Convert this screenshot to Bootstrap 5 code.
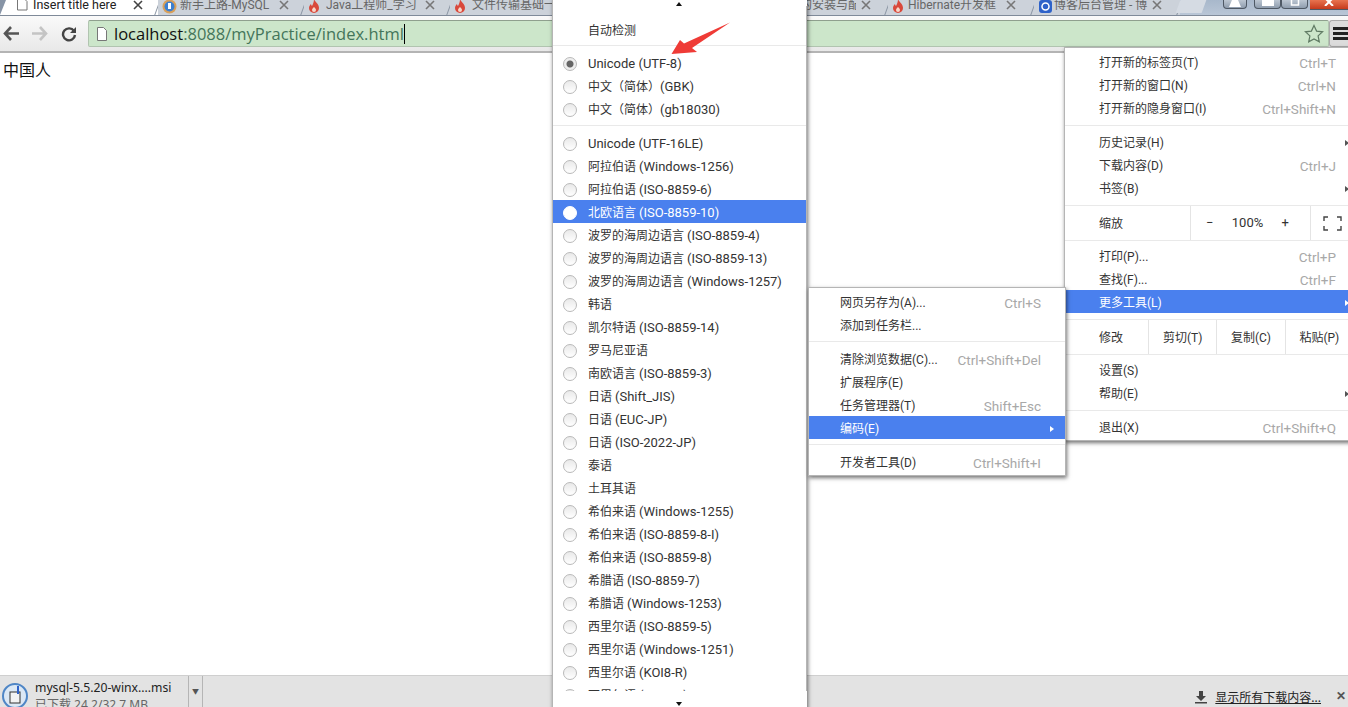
<!DOCTYPE html>
<html lang="zh">
<head>
<meta charset="utf-8">
<title>Insert title here</title>
<link href="https://cdn.jsdelivr.net/npm/bootstrap@5.3.0/dist/css/bootstrap.min.css" rel="stylesheet">
<style>
html,body{height:100%;margin:0}
body{width:1348px;height:707px;overflow:hidden;position:relative;background:#fff;font-family:"Roboto","Noto Sans CJK SC",sans-serif;font-size:12px;color:#333}
.ui-strip{height:16px;background:linear-gradient(#a8b8cb,#b9c6d6);overflow:hidden;border-bottom:1px solid #7f8a99}
.ui-tab{flex:0 0 146px;height:15px;position:relative;background:#ccd2da;color:#666;font-size:12px;line-height:10px;white-space:nowrap}
.ui-tab::after{content:"";position:absolute;right:0;top:-2px;bottom:-2px;border-right:1px solid #8a95a3;transform:skewX(-20deg)}
.ui-tab-active{flex-basis:158px;background:#fff;color:#222;font-size:12.5px}
.ui-tab-active::before{content:"";position:absolute;left:0;top:0;width:0;height:0;border-top:15px solid #8794a6;border-right:6px solid transparent}
.ui-tab-wide{flex-basis:292px}
.ui-tab-label{position:absolute;left:22px;top:0;overflow:hidden;width:94px;height:15px}
.ui-tab-label-near{left:20px}
.ui-tab-label-first{left:33px;width:92px}
.ui-tab-label-end{left:204px;width:56px}
.ui-tab-ico{position:absolute;left:4px;top:-1px}
.ui-tab-ico-page{left:17px}
.ui-tab-x{position:absolute;left:121px;top:0}
.ui-tab-x-first{left:133px}
.ui-tab-x-wide{left:265px}
.ui-tab-x-near{left:118px}
.ui-newtab{width:26px;height:13px;background:#d5dbe3;transform:skewX(-20deg);margin-left:-2px}
.ui-ctrl{height:9px;background:linear-gradient(#bcc6d2,#8f9dae);border:1px solid #4e5864;border-top:0;border-radius:0 0 4px 4px;display:flex;align-items:flex-start;justify-content:center}
.ui-ctrl-close{background:linear-gradient(#e8734f,#c63a1c);border-radius:0;border-width:0 0 1px 0;height:10px}
.ui-bar{height:37px;background:linear-gradient(#fafafa,#e8e8e8);border-bottom:2px solid #b4b4b4;padding:4px 0 0 0}
.ui-nav{width:83px;padding-left:3px;gap:11px;height:27px}
.ui-reload{margin-left:2px}
.ui-omni{flex:1 1 auto;height:27px;margin-left:5px;background:#cce6ca;border:1px solid #b1c4b0;border-top-color:#8fa08e;border-radius:2px;padding-left:7px;font-size:16.5px;line-height:25px;color:#44755a;font-family:"Open Sans","Noto Sans",sans-serif}
.ui-omni b{font-weight:400;color:#111}
.ui-omni-page{margin-right:6px;flex-shrink:0}
.ui-caret{display:inline-block;width:1px;height:20px;background:#000;vertical-align:-4px}
.ui-burger{width:19px;height:27px;background:#dcdcdc;border:1px solid #aaa;border-right:0;border-radius:3px 0 0 3px;padding:6px 0 0 3px}
.ui-burger i{display:block;height:3px;background:#222;margin-bottom:2px}
.ui-page{flex:1 1 auto;padding:4px 3px;font-size:16px;line-height:24px;color:#111;font-family:"Noto Sans CJK SC",sans-serif}
.ui-dl{height:32px;background:#e3e3e3;border-top:1px solid #cfcfcf;font-size:12.2px;overflow:hidden;font-family:"Noto Sans","Noto Sans CJK SC",sans-serif}
.ui-dl-file{width:188px;padding:4px 0 0 35px;line-height:16px;position:relative;color:#222;white-space:nowrap}
.ui-dl-sub{color:#666;font-size:12px;margin-top:1px}
.ui-dl-btn{width:15px;border-left:1px solid #b5b5b5;border-right:1px solid #b5b5b5;text-align:center;color:#555;font-size:7px;padding-top:11px}
.ui-dl-ico{position:absolute;left:2px;top:7px}
.ui-dl-arrow{margin-top:14px}
.ui-dl-all{color:#222;text-decoration:underline;font-size:12px;margin:13px 15px 0 7px}
.ui-dl-x{margin:11px 2px 0 0;font-weight:700;color:#555}
.ui-menu{position:absolute;background:#fff;box-shadow:1px 2px 4px rgba(0,0,0,.55);border:1px solid #b5b5b5;font-size:12px;color:#333;white-space:nowrap}
.ui-menu-enc{left:552px;top:-2px;width:255px;height:712px;padding-top:19px;overflow:hidden}
.ui-menu-main{left:1064px;top:47px;width:290px;padding:2px 0}
.ui-menu-sub{left:808px;top:287px;width:258px;padding:2px 0 2px}
.ui-item{height:23px;line-height:21px;padding:2px 24px 0 35px}
.ui-menu-main .ui-item{padding:3px 17px 0 34px}
.ui-menu-sub .ui-item{padding-left:31px;padding-top:3px}
.ui-menu-enc .ui-item-top{padding-top:3px}
.ui-plain{margin-top:2px}
.ui-la{font-size:13px}
.ui-key{color:#a8a8a8;font-size:13.5px}
.ui-hi{background:#4a80ee;color:#fff}
.ui-sep{height:1px;background:#e9e9e9;margin:5px 0}
.ui-sep-first{margin-top:4px}
.ui-menu-main .ui-sep{margin:6px 0 4px}
.ui-menu-main .ui-sep-tight{margin-bottom:0}
.ui-menu-main .ui-sep-after{margin:0 0 3px}
.ui-radio{width:14px;height:14px;border-radius:50%;border:1px solid #b9b9b9;background:linear-gradient(#e9e9e9,#fff);margin:0 11px 0 -25px;flex:none}
.ui-radio-on{background:radial-gradient(circle,#666 0,#666 3px,#eee 4px)}
.ui-hi .ui-radio{background:#fff;border-color:#fff}
.ui-arrow{width:0;height:0;border-style:solid;border-width:3px 0 3px 4px;border-color:transparent transparent transparent currentColor}
.ui-out{margin-right:-13px;color:#555}
.ui-out-hi{color:#fff}
.ui-sub-out{margin-right:-13px}
.ui-tool{height:34px;padding-left:34px}
.ui-tool-label{line-height:36px;flex-shrink:0}
.ui-tool-cell{border-left:1px solid #e4e4e4;height:34px;line-height:36px;text-align:center}
.ui-zoom{width:120px;padding:0 21px 0 15px;font-size:13px;line-height:34px}
.ui-full{padding-left:12px;line-height:34px}
.ui-scroll{position:absolute;left:553px;width:254px;background:#fff;height:6px}
.ui-scroll-bot{top:691px;height:16px}
.ui-tri{position:absolute;left:123px;width:0;height:0;border-left:3px solid transparent;border-right:3px solid transparent}
.ui-tri-up{top:2px;border-bottom:4px solid #111}
.ui-tri-down{top:11px;border-top:4px solid #111}
.ui-arrow-mark{position:absolute;left:665px;top:18px}
.w-user{width:24px}.w-win{width:27px}.w-close{width:38px}
.ui-gap-7{margin-right:7px}.ui-gap-2{margin-right:2px}
</style>
</head>
<body class="d-flex flex-column">

<div class="ui-strip d-flex flex-shrink-0">
  <div class="ui-tab ui-tab-active">
    <svg class="ui-tab-ico ui-tab-ico-page" width="11" height="12" viewBox="0 0 11 12"><path d="M.5-1h6l3.500 3.500V11H.5z" fill="#fff" stroke="#777"/></svg>
    <span class="ui-tab-label ui-tab-label-first">Insert title here</span>
    <svg class="ui-tab-x ui-tab-x-first" width="10" height="10" viewBox="0 0 10 10"><path d="M1 1l8 8M9 1l-8 8" stroke="#444" stroke-width="1.6"/></svg>
  </div>
  <div class="ui-tab">
    <svg class="ui-tab-ico" width="15" height="15" viewBox="0 0 15 15"><circle cx="7.500" cy="7.500" r="7" fill="#d9a05a"/><circle cx="7.500" cy="7.500" r="5" fill="#3c7fd0"/><rect x="6" y="4" width="3" height="6" fill="#fff"/></svg>
    <span class="ui-tab-label">新手上路-MySQL</span>
    <svg class="ui-tab-x" width="10" height="10" viewBox="0 0 10 10"><path d="M1 1l8 8M9 1l-8 8" stroke="#777" stroke-width="1.600"/></svg>
  </div>
  <div class="ui-tab">
    <svg class="ui-tab-ico" width="13" height="15" viewBox="0 0 13 15"><path d="M6 0c1 3 5 5 5 9a5 5 0 0 1-10 0c0-2 1-3 2-4 0 1 1 2 1 2 1-2 2-4 2-7z" fill="#d9483b"/><path d="M6 8c1 1 2 2 2 3a2 2 0 0 1-4 0c0-1 1-2 2-3z" fill="#f7d6c8"/></svg>
    <span class="ui-tab-label">Java工程师_学习</span>
    <svg class="ui-tab-x" width="10" height="10" viewBox="0 0 10 10"><path d="M1 1l8 8M9 1l-8 8" stroke="#777" stroke-width="1.600"/></svg>
  </div>
  <div class="ui-tab">
    <svg class="ui-tab-ico" width="13" height="15" viewBox="0 0 13 15"><path d="M6 0c1 3 5 5 5 9a5 5 0 0 1-10 0c0-2 1-3 2-4 0 1 1 2 1 2 1-2 2-4 2-7z" fill="#d9483b"/><path d="M6 8c1 1 2 2 2 3a2 2 0 0 1-4 0c0-1 1-2 2-3z" fill="#f7d6c8"/></svg>
    <span class="ui-tab-label">文件传输基础一</span>
  </div>
  <div class="ui-tab ui-tab-wide">
    <span class="ui-tab-label ui-tab-label-end">的安装与配</span>
    <svg class="ui-tab-x ui-tab-x-wide" width="10" height="10" viewBox="0 0 10 10"><path d="M1 1l8 8M9 1l-8 8" stroke="#777" stroke-width="1.600"/></svg>
  </div>
  <div class="ui-tab">
    <svg class="ui-tab-ico" width="13" height="15" viewBox="0 0 13 15"><path d="M6 0c1 3 5 5 5 9a5 5 0 0 1-10 0c0-2 1-3 2-4 0 1 1 2 1 2 1-2 2-4 2-7z" fill="#d9483b"/><path d="M6 8c1 1 2 2 2 3a2 2 0 0 1-4 0c0-1 1-2 2-3z" fill="#f7d6c8"/></svg>
    <span class="ui-tab-label ui-tab-label-near">Hibernate开发框</span>
    <svg class="ui-tab-x ui-tab-x-near" width="10" height="10" viewBox="0 0 10 10"><path d="M1 1l8 8M9 1l-8 8" stroke="#777" stroke-width="1.600"/></svg>
  </div>
  <div class="ui-tab">
    <svg class="ui-tab-ico" width="15" height="15" viewBox="0 0 15 15"><rect x="1" y="1" width="13" height="13" rx="3" fill="#2e62c9"/><circle cx="7.500" cy="7.500" r="3.500" fill="none" stroke="#fff" stroke-width="1.500"/></svg>
    <span class="ui-tab-label ui-tab-label-near">博客后台管理 - 博</span>
    <svg class="ui-tab-x ui-tab-x-near" width="10" height="10" viewBox="0 0 10 10"><path d="M1 1l8 8M9 1l-8 8" stroke="#777" stroke-width="1.600"/></svg>
  </div>
  <div class="ui-newtab flex-shrink-0"></div>
  <div class="ms-auto d-flex">
    <div class="ui-ctrl w-user ui-gap-7"><svg width="12" height="7" viewBox="0 0 12 7"><path d="M3 0h6l3 7H0z" fill="#fff"/></svg></div>
    <div class="ui-ctrl w-win"><svg width="12" height="6" viewBox="0 0 12 6"><rect width="12" height="6" fill="#fff"/></svg></div>
    <div class="ui-ctrl w-win ui-gap-2"><svg width="12" height="6" viewBox="0 0 12 6"><path d="M2.500 0v5h7V0" fill="none" stroke="#fff" stroke-width="1.500"/></svg></div>
    <div class="ui-ctrl ui-ctrl-close w-close"><svg width="12" height="6" viewBox="0 0 12 6"><path d="M2 -2l8 8M10 -2l-8 8" stroke="#fff" stroke-width="2"/></svg></div>
  </div>
</div>

<div class="ui-bar d-flex flex-shrink-0">
  <div class="ui-nav d-flex align-items-center flex-shrink-0">
    <svg width="17" height="15" viewBox="0 0 17 15"><path d="M8 1L2 7.500 8 14M2 7.500h14" fill="none" stroke="#555" stroke-width="2.600"/></svg>
    <svg width="17" height="15" viewBox="0 0 17 15"><path d="M9 1l6 6.500L9 14M15 7.500H1" fill="none" stroke="#c4c4c4" stroke-width="2.600"/></svg>
    <svg class="ui-reload" width="16" height="16" viewBox="0 0 16 16"><path d="M13 5A6 6 0 1 0 14 9" fill="none" stroke="#444" stroke-width="2.400"/><path d="M15 1v6H9z" fill="#444"/></svg>
  </div>
  <div class="ui-omni d-flex align-items-center">
    <svg class="ui-omni-page" width="12" height="14" viewBox="0 0 12 14"><path d="M1.500.5h6l3 3v10h-9z" fill="#fff" stroke="#777"/></svg>
    <span><b>localhost</b>:8088/myPractice/index.html<span class="ui-caret"></span></span>
    <svg class="ms-auto me-1" width="20" height="20" viewBox="0 0 20 20"><path d="M10 1.500l2.600 5.600 6 .7-4.500 4.100 1.200 6L10 15l-5.300 2.900 1.200-6L1.400 7.800l6-.7z" fill="none" stroke="#5f7a63" stroke-width="1.200"/></svg>
  </div>
  <div class="ui-burger flex-shrink-0"><i></i><i></i><i></i></div>
</div>

<main class="ui-page">中国人</main>

<div class="ui-dl d-flex flex-shrink-0">
  <div class="ui-dl-file">
    <svg class="ui-dl-ico" width="26" height="26" viewBox="0 0 26 26"><circle cx="13" cy="13" r="12" fill="#dbe8f5" stroke="#4f86c6" stroke-width="2"/><rect x="8" y="9" width="10" height="11" fill="#f3f3f3" stroke="#333"/><path d="M16 3v8" stroke="#2e62c9" stroke-width="2"/></svg>
    <div>mysql-5.5.20-winx....msi</div>
    <div class="ui-dl-sub">已下载 24.2/32.7 MB</div>
  </div>
  <div class="ui-dl-btn">▼</div>
  <svg class="ms-auto ui-dl-arrow" width="14" height="14" viewBox="0 0 14 14"><path d="M5 1h4v5h3L7 11 2 6h3zM1 12h12v1.500H1z" fill="#444"/></svg>
  <div class="ui-dl-all">显示所有下载内容...</div>
  <div class="ui-dl-x">✕</div>
</div>

<div class="ui-menu ui-menu-enc">
  <div class="ui-item ui-item-top">自动检测</div>
  <div class="ui-sep ui-sep-first"></div>
  <div class="ui-item d-flex align-items-center"><span class="ui-radio ui-radio-on"></span><span class="ui-la">Unicode (UTF-8)</span></div>
  <div class="ui-item d-flex align-items-center"><span class="ui-radio"></span><span>中文（简体）<span class="ui-la">(GBK)</span></span></div>
  <div class="ui-item d-flex align-items-center"><span class="ui-radio"></span><span>中文（简体）<span class="ui-la">(gb18030)</span></span></div>
  <div class="ui-sep"></div>
  <div class="ui-item d-flex align-items-center"><span class="ui-radio"></span><span class="ui-la">Unicode (UTF-16LE)</span></div>
  <div class="ui-item d-flex align-items-center"><span class="ui-radio"></span><span>阿拉伯语 <span class="ui-la">(Windows-1256)</span></span></div>
  <div class="ui-item d-flex align-items-center"><span class="ui-radio"></span><span>阿拉伯语 <span class="ui-la">(ISO-8859-6)</span></span></div>
  <div class="ui-item ui-hi d-flex align-items-center"><span class="ui-radio"></span><span>北欧语言 <span class="ui-la">(ISO-8859-10)</span></span></div>
  <div class="ui-item d-flex align-items-center"><span class="ui-radio"></span><span>波罗的海周边语言 <span class="ui-la">(ISO-8859-4)</span></span></div>
  <div class="ui-item d-flex align-items-center"><span class="ui-radio"></span><span>波罗的海周边语言 <span class="ui-la">(ISO-8859-13)</span></span></div>
  <div class="ui-item d-flex align-items-center"><span class="ui-radio"></span><span>波罗的海周边语言 <span class="ui-la">(Windows-1257)</span></span></div>
  <div class="ui-item d-flex align-items-center"><span class="ui-radio"></span><span class="ui-plain">韩语</span></div>
  <div class="ui-item d-flex align-items-center"><span class="ui-radio"></span><span>凯尔特语 <span class="ui-la">(ISO-8859-14)</span></span></div>
  <div class="ui-item d-flex align-items-center"><span class="ui-radio"></span><span class="ui-plain">罗马尼亚语</span></div>
  <div class="ui-item d-flex align-items-center"><span class="ui-radio"></span><span>南欧语言 <span class="ui-la">(ISO-8859-3)</span></span></div>
  <div class="ui-item d-flex align-items-center"><span class="ui-radio"></span><span>日语 <span class="ui-la">(Shift_JIS)</span></span></div>
  <div class="ui-item d-flex align-items-center"><span class="ui-radio"></span><span>日语 <span class="ui-la">(EUC-JP)</span></span></div>
  <div class="ui-item d-flex align-items-center"><span class="ui-radio"></span><span>日语 <span class="ui-la">(ISO-2022-JP)</span></span></div>
  <div class="ui-item d-flex align-items-center"><span class="ui-radio"></span><span class="ui-plain">泰语</span></div>
  <div class="ui-item d-flex align-items-center"><span class="ui-radio"></span><span class="ui-plain">土耳其语</span></div>
  <div class="ui-item d-flex align-items-center"><span class="ui-radio"></span><span>希伯来语 <span class="ui-la">(Windows-1255)</span></span></div>
  <div class="ui-item d-flex align-items-center"><span class="ui-radio"></span><span>希伯来语 <span class="ui-la">(ISO-8859-8-I)</span></span></div>
  <div class="ui-item d-flex align-items-center"><span class="ui-radio"></span><span>希伯来语 <span class="ui-la">(ISO-8859-8)</span></span></div>
  <div class="ui-item d-flex align-items-center"><span class="ui-radio"></span><span>希腊语 <span class="ui-la">(ISO-8859-7)</span></span></div>
  <div class="ui-item d-flex align-items-center"><span class="ui-radio"></span><span>希腊语 <span class="ui-la">(Windows-1253)</span></span></div>
  <div class="ui-item d-flex align-items-center"><span class="ui-radio"></span><span>西里尔语 <span class="ui-la">(ISO-8859-5)</span></span></div>
  <div class="ui-item d-flex align-items-center"><span class="ui-radio"></span><span>西里尔语 <span class="ui-la">(Windows-1251)</span></span></div>
  <div class="ui-item d-flex align-items-center"><span class="ui-radio"></span><span>西里尔语 <span class="ui-la">(KOI8-R)</span></span></div>
  <div class="ui-item d-flex align-items-center"><span class="ui-radio"></span><span>西里尔语 <span class="ui-la">(KOI8-U)</span></span></div>
</div>
<div class="ui-scroll top-0"><span class="ui-tri ui-tri-up"></span></div>
<div class="ui-scroll ui-scroll-bot"><span class="ui-tri ui-tri-down"></span></div>

<div class="ui-menu ui-menu-main">
  <div class="ui-item d-flex justify-content-between"><span>打开新的标签页(T)</span><span class="ui-key">Ctrl+T</span></div>
  <div class="ui-item d-flex justify-content-between"><span>打开新的窗口(N)</span><span class="ui-key">Ctrl+N</span></div>
  <div class="ui-item d-flex justify-content-between"><span>打开新的隐身窗口(I)</span><span class="ui-key">Ctrl+Shift+N</span></div>
  <div class="ui-sep"></div>
  <div class="ui-item d-flex justify-content-between align-items-center"><span>历史记录(H)</span><span class="ui-arrow ui-out"></span></div>
  <div class="ui-item d-flex justify-content-between"><span>下载内容(D)</span><span class="ui-key">Ctrl+J</span></div>
  <div class="ui-item d-flex justify-content-between align-items-center"><span>书签(B)</span><span class="ui-arrow ui-out"></span></div>
  <div class="ui-sep ui-sep-tight"></div>
  <div class="ui-tool d-flex">
    <div class="ui-tool-label" style="width:91px">缩放</div>
    <div class="ui-tool-cell ui-zoom d-flex justify-content-between"><span>−</span><span>100%</span><span>+</span></div>
    <div class="ui-tool-cell ui-full flex-grow-1 text-start"><svg width="19" height="15" viewBox="0 0 19 15"><path d="M1 5V1h4M14 1h4v4M18 10v4h-4M5 14H1v-4" fill="none" stroke="#444" stroke-width="1.400"/></svg></div>
  </div>
  <div class="ui-sep ui-sep-after"></div>
  <div class="ui-item d-flex justify-content-between"><span>打印(P)...</span><span class="ui-key">Ctrl+P</span></div>
  <div class="ui-item d-flex justify-content-between"><span>查找(F)...</span><span class="ui-key">Ctrl+F</span></div>
  <div class="ui-item ui-hi d-flex justify-content-between align-items-center"><span>更多工具(L)</span><span class="ui-arrow ui-out ui-out-hi"></span></div>
  <div class="ui-sep ui-sep-tight"></div>
  <div class="ui-tool d-flex">
    <div class="ui-tool-label" style="width:49px">修改</div>
    <div class="ui-tool-cell" style="width:71px">剪切(T)</div>
    <div class="ui-tool-cell" style="width:71px">复制(C)</div>
    <div class="ui-tool-cell" style="width:71px">粘贴(P)</div>
  </div>
  <div class="ui-sep ui-sep-after"></div>
  <div class="ui-item">设置(S)</div>
  <div class="ui-item d-flex justify-content-between align-items-center"><span>帮助(E)</span><span class="ui-arrow ui-out"></span></div>
  <div class="ui-sep"></div>
  <div class="ui-item d-flex justify-content-between"><span>退出(X)</span><span class="ui-key">Ctrl+Shift+Q</span></div>
</div>

<div class="ui-menu ui-menu-sub">
  <div class="ui-item d-flex justify-content-between"><span>网页另存为(A)...</span><span class="ui-key">Ctrl+S</span></div>
  <div class="ui-item">添加到任务栏...</div>
  <div class="ui-sep"></div>
  <div class="ui-item d-flex justify-content-between"><span>清除浏览数据(C)...</span><span class="ui-key">Ctrl+Shift+Del</span></div>
  <div class="ui-item">扩展程序(E)</div>
  <div class="ui-item d-flex justify-content-between"><span>任务管理器(T)</span><span class="ui-key">Shift+Esc</span></div>
  <div class="ui-item ui-hi d-flex justify-content-between align-items-center"><span>编码(E)</span><span class="ui-arrow ui-sub-out"></span></div>
  <div class="ui-sep"></div>
  <div class="ui-item d-flex justify-content-between"><span>开发者工具(D)</span><span class="ui-key">Ctrl+Shift+I</span></div>
</div>

<svg class="ui-arrow-mark" width="70" height="40" viewBox="665 18 70 40"><polygon points="671.500,54 680,40 684,43.500 730,22.500 692,48 697,52" fill="#ef3b36"/></svg>

<script src="https://cdn.jsdelivr.net/npm/bootstrap@5.3.0/dist/js/bootstrap.bundle.min.js"></script>
</body>
</html>
